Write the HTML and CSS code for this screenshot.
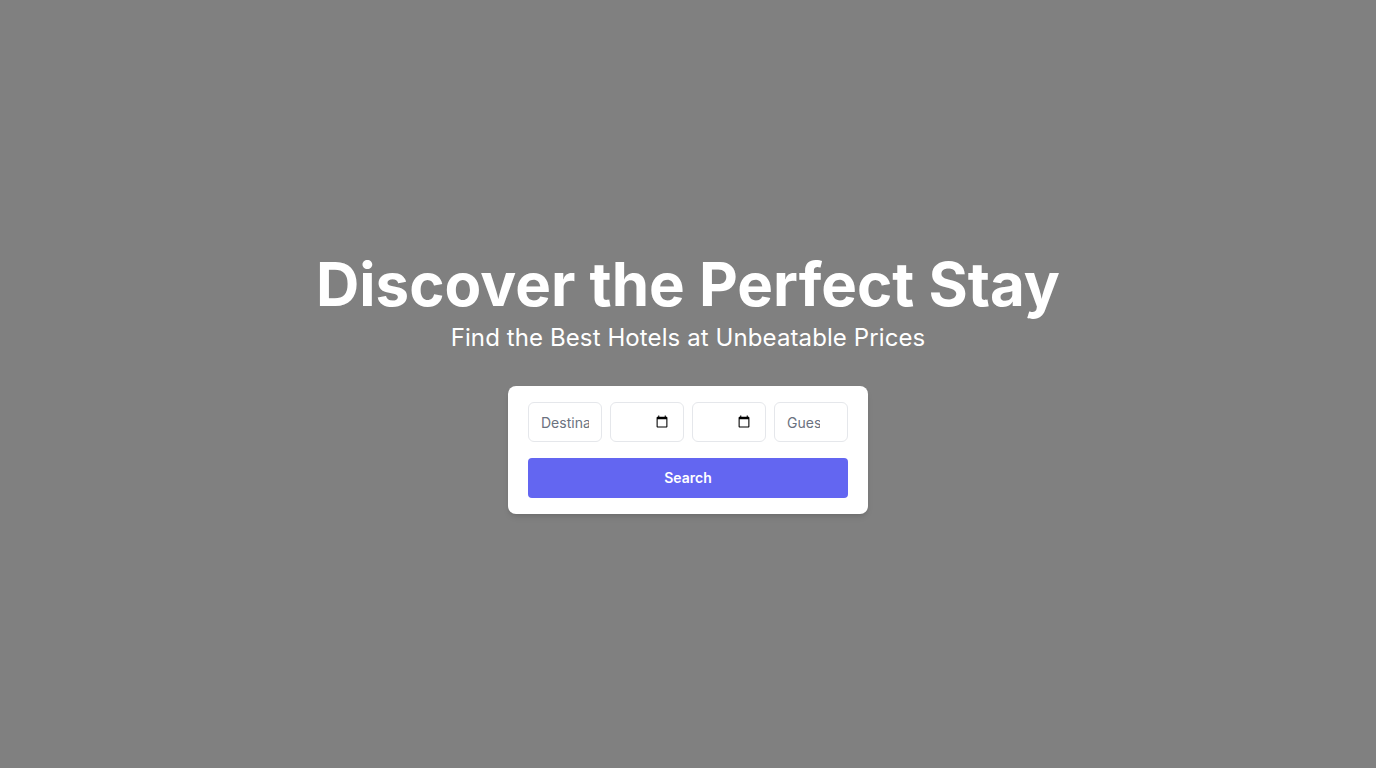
FILE: index.html
```html
<!DOCTYPE html>
<html lang="en">
<head>
<meta charset="utf-8">
<title>Discover the Perfect Stay</title>
<link rel="stylesheet" href="styles.css">
</head>
<body>
<main class="hero">
  <div class="hero-content">
    <h1 class="title">Discover the Perfect Stay</h1>
    <p class="subtitle">Find the Best Hotels at Unbeatable Prices</p>
    <form class="search-card">
      <div class="fields">
        <input class="field" type="text" placeholder="Destination">
        <input class="field field-date" type="date">
        <input class="field field-date" type="date">
        <input class="field" type="number" placeholder="Guests">
      </div>
      <button class="search-btn" type="button">Search</button>
    </form>
  </div>
</main>
</body>
</html>
```

FILE: styles.css
```css
* { box-sizing: border-box; }
html, body { margin: 0; padding: 0; }
body {
  font-family: Inter, "Noto Sans", sans-serif;
  background: #808080;
  color: #fff;
}
.hero {
  min-height: 100vh;
  display: flex;
  align-items: center;
  justify-content: center;
}
.hero-content {
  display: flex;
  flex-direction: column;
  align-items: center;
  text-align: center;
}
.title {
  margin: 0 0 8px;
  font-size: 60px;
  line-height: 60px;
  font-weight: 700;
}
.subtitle {
  margin: 0 0 32px;
  font-size: 24px;
  line-height: 32px;
  font-weight: 400;
  letter-spacing: 0.1px;
}
.search-card {
  width: 360px;
  background: #fff;
  border-radius: 8px;
  padding: 16px 20px;
  box-shadow: 0 4px 6px -1px rgba(0,0,0,0.1), 0 2px 4px -2px rgba(0,0,0,0.1);
  display: flex;
  flex-direction: column;
  gap: 16px;
}
.fields {
  display: flex;
  gap: 8px;
}
.field {
  width: 74px;
  height: 40px;
  min-width: 0;
  border: 1px solid #e5e7eb;
  border-radius: 6px;
  padding: 0 12px;
  font-family: Inter, sans-serif;
  font-size: 14px;
  color: #111827;
  background: #fff;
}
.field::placeholder { color: #6b7280; }
.field-date::-webkit-datetime-edit { visibility: hidden; }
.search-btn {
  height: 40px;
  border: none;
  border-radius: 4px;
  background: #6366f1;
  color: #fff;
  font-family: Inter, sans-serif;
  font-size: 14px;
  font-weight: 600;
  line-height: 40px;
  padding: 0;
}
```
